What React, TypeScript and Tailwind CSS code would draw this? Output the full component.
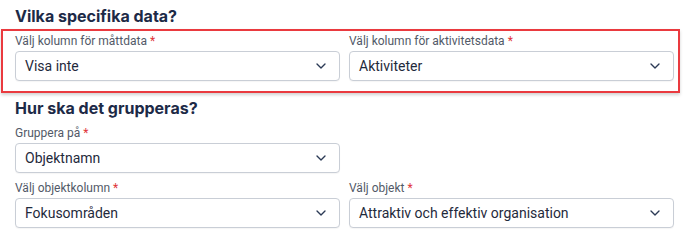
import React from "react";
import { ChevronDown } from "lucide-react";

function Field({ label, value }: { label: string; value: string }) {
  return (
    <div className="flex flex-col">
      <div className="h-[15px] leading-[15px] text-[12px] text-[#525a68] mb-[2px] whitespace-nowrap">
        {label} <span className="text-[#e0343a]">*</span>
      </div>
      <div className="h-[30px] flex items-center justify-between rounded-[4px] border-[1.5px] border-[#c9ced6] bg-white pl-[9px] pr-[10px] shadow-[0_1px_1px_rgba(0,0,0,0.04)]">
        <span className="text-[14px] text-[#1f2a3c] whitespace-nowrap">{value}</span>
        <ChevronDown size={16} strokeWidth={2} className="text-[#2b3a55]" />
      </div>
    </div>
  );
}

export default function App() {
  return (
    <div
      className="w-[688px] h-[248px] bg-white pl-[15px] pr-[14px] pt-[6px] overflow-hidden"
      style={{ fontFamily: "Roboto, 'Liberation Sans', sans-serif" }}
    >
      <h2
        className="text-[16px] leading-[20px] font-bold text-[#1d2a47]"
        style={{ fontFamily: "Inter, 'Liberation Sans', sans-serif" }}
      >
        Vilka specifika data?
      </h2>
      <div className="mt-[3px] ml-[-14px] w-[679px] border-2 border-[#ea3a3f] pl-[12px] pr-[4px] pt-[3px] pb-[10px] shadow-[0_2px_3px_rgba(0,0,0,0.18)]">
        <div className="grid grid-cols-[325px_325px] gap-x-[9px]">
          <Field label="Välj kolumn för måttdata" value="Visa inte" />
          <Field label="Välj kolumn för aktivitetsdata" value="Aktiviteter" />
        </div>
      </div>
      <h2
        className="mt-[5px] text-[16px] leading-[20px] font-bold text-[#1d2a47]"
        style={{ fontFamily: "Inter, 'Liberation Sans', sans-serif" }}
      >
        Hur ska det grupperas?
      </h2>
      <div className="mt-[8px] grid grid-cols-[325px_325px] gap-x-[9px] gap-y-[8px]">
        <Field label="Gruppera på" value="Objektnamn" />
        <div />
        <Field label="Välj objektkolumn" value="Fokusområden" />
        <Field label="Välj objekt" value="Attraktiv och effektiv organisation" />
      </div>
    </div>
  );
}
